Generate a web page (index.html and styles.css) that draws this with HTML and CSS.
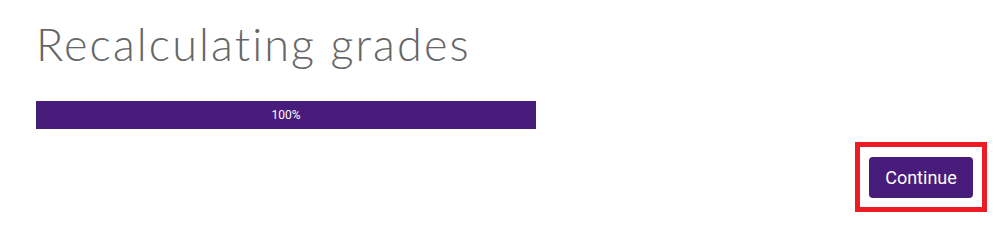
FILE: index.html
```html
<!DOCTYPE html>
<html lang="en">
<head>
<meta charset="utf-8">
<title>Recalculating grades</title>
<link rel="stylesheet" href="styles.css">
</head>
<body>
<main class="page">
  <h1 class="title">Recalculating grades</h1>
  <div class="progress">
    <div class="progress-bar" style="width: 100%">100%</div>
  </div>
  <div class="actions">
    <div class="highlight">
      <button class="btn-continue" type="button">Continue</button>
    </div>
  </div>
</main>
</body>
</html>
```

FILE: styles.css
```css
html, body {
  margin: 0;
  padding: 0;
  background: #ffffff;
}

.page {
  padding: 0 15px 0 36px;
  font-family: Roboto, "Liberation Sans", sans-serif;
}

.title {
  margin: 0;
  padding-top: 17px;
  font-family: Lato, "Open Sans", sans-serif;
  font-weight: 300;
  font-size: 45px;
  line-height: 54px;
  color: #666666;
  letter-spacing: 2.1px;
}

.progress {
  margin-top: 30px;
  width: 500px;
  height: 28px;
  background: #e9e9e9;
}

.progress-bar {
  height: 100%;
  background: #481c7a;
  color: #ffffff;
  font-size: 12px;
  line-height: 28px;
  text-align: center;
}

.actions {
  display: flex;
  justify-content: flex-end;
  margin-top: 13px;
}

.highlight {
  border: 5px solid #ed1c24;
  padding: 10px 9px 9px 9px;
}

.btn-continue {
  display: block;
  width: 104px;
  height: 41px;
  border: 0;
  border-radius: 4px;
  background: #481c7a;
  color: #ffffff;
  font-family: Roboto, "Liberation Sans", sans-serif;
  font-size: 18px;
  padding: 0;
}
```
